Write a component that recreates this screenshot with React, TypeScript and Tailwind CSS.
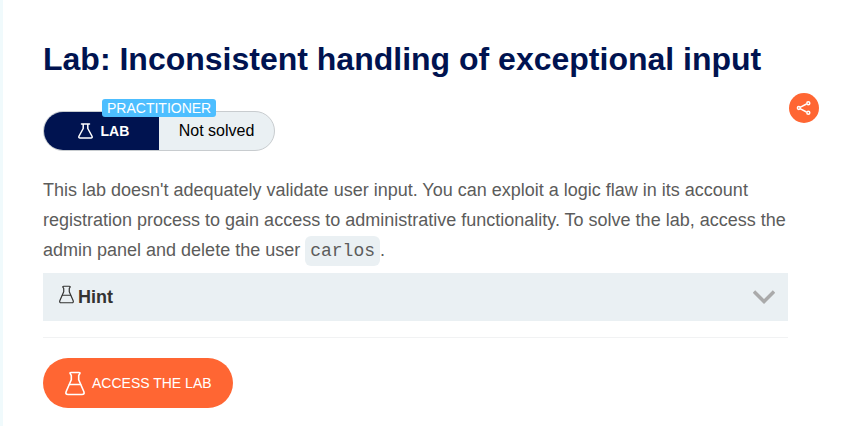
type FlaskProps = { className: string; sw?: number };

function Flask({ className, sw = 1.6 }: FlaskProps) {
  return (
    <svg className={className} viewBox="0 0 20 24" fill="none" stroke="currentColor" strokeWidth={sw} strokeLinecap="round" strokeLinejoin="round">
      <path d="M6 1h8q1.300 0 .8 1.200L13.700 4v4.200L18.800 20q1.100 3-1.800 3H3q-2.900 0-1.800-3L6.300 8.200V4L5.200 2.200Q4.700 1 6 1Z" />
      <path d="M4.500 13h11" />
    </svg>
  );
}

function SmallFlask({ className }: { className: string }) {
  return (
    <svg className={className} viewBox="0 0 15 16" fill="none" stroke="currentColor" strokeWidth="1.500" strokeLinecap="round" strokeLinejoin="round">
      <path d="M3.500 1h8M5.200 1v4.500L1.100 13q-.9 2 1 2h10.800q1.900 0 1-2L9.800 5.500V1" />
    </svg>
  );
}

export default function App() {
  return (
    <div className="flex h-[426px] w-[853px] overflow-hidden bg-white font-['Liberation_Sans',Arial,sans-serif]">
      <div className="w-[3px] shrink-0 bg-[#f0fafc]" />
      <main className="ml-10 w-[745px] shrink-0 pt-[39px]">
        <h1 className="whitespace-nowrap text-[32px] font-bold leading-10 text-[#001350]">Lab: Inconsistent handling of exceptional input</h1>
        <div className="relative mt-8 flex h-10 w-[232px] overflow-visible rounded-full border border-[#c8cccf] bg-[#eaf0f3]">
          <div className="flex w-[115px] items-center rounded-l-full bg-[#001350] pl-[34px] text-sm font-bold text-white">
            <SmallFlask className="mr-[7.500px] h-4 w-[15px]" />LAB
          </div>
          <div className="flex flex-1 items-center justify-center text-base text-black">Not solved</div>
          <span className="absolute -top-[13px] left-[58px] h-[18px] rounded-[3px] bg-[#4dbeff] px-[5px] text-sm leading-[18px] text-white">PRACTITIONER</span>
        </div>
        <p className="mt-6 whitespace-nowrap text-[18px] leading-[30px] text-[#5c5c5b]">
          This lab doesn't adequately validate user input. You can exploit a logic flaw in its account<br />
          registration process to gain access to administrative functionality. To solve the lab, access the<br />
          admin panel and delete the user <code className="rounded-md bg-[#eaf0f3] p-[5px] font-['Liberation_Mono',monospace] text-[18px]">carlos</code>.
        </p>
        <div className="mt-[7px] flex h-12 items-center bg-[#eaf0f3] pl-4 pr-[13px] text-[18px] font-bold text-[#333332]">
          <Flask className="mb-1.5 mr-1 h-[19px] w-[15px]" />Hint
          <svg className="ml-auto h-[14px] w-[22px] text-[#aaa]" viewBox="0 0 22 14" fill="none" stroke="currentColor" strokeWidth="3.400"><path d="m1 1.500 10 10 10-10" /></svg>
        </div>
        <div className="mt-4 border-t border-[#f1f2f3]" />
        <button className="mt-5 flex h-[50px] w-[190px] items-center rounded-full bg-[#ff6633] pl-[22px] text-sm text-white">
          <Flask className="mr-[7px] h-[25px] w-5" />ACCESS THE LAB
        </button>
      </main>
      <div className="ml-px mt-[93px] flex size-[30px] items-center justify-center rounded-full bg-[#ff6633] text-white">
        <svg className="size-4" viewBox="0 0 16 16" fill="none" stroke="currentColor" strokeWidth="1.500"><path d="m4 7.300 6.500-3.300M4 8.700l6.500 3.300" /><circle cx="2.800" cy="8" r="1.400" /><circle cx="12.300" cy="3.200" r="1.500" /><circle cx="12.300" cy="12.800" r="1.500" /></svg>
      </div>
    </div>
  );
}
